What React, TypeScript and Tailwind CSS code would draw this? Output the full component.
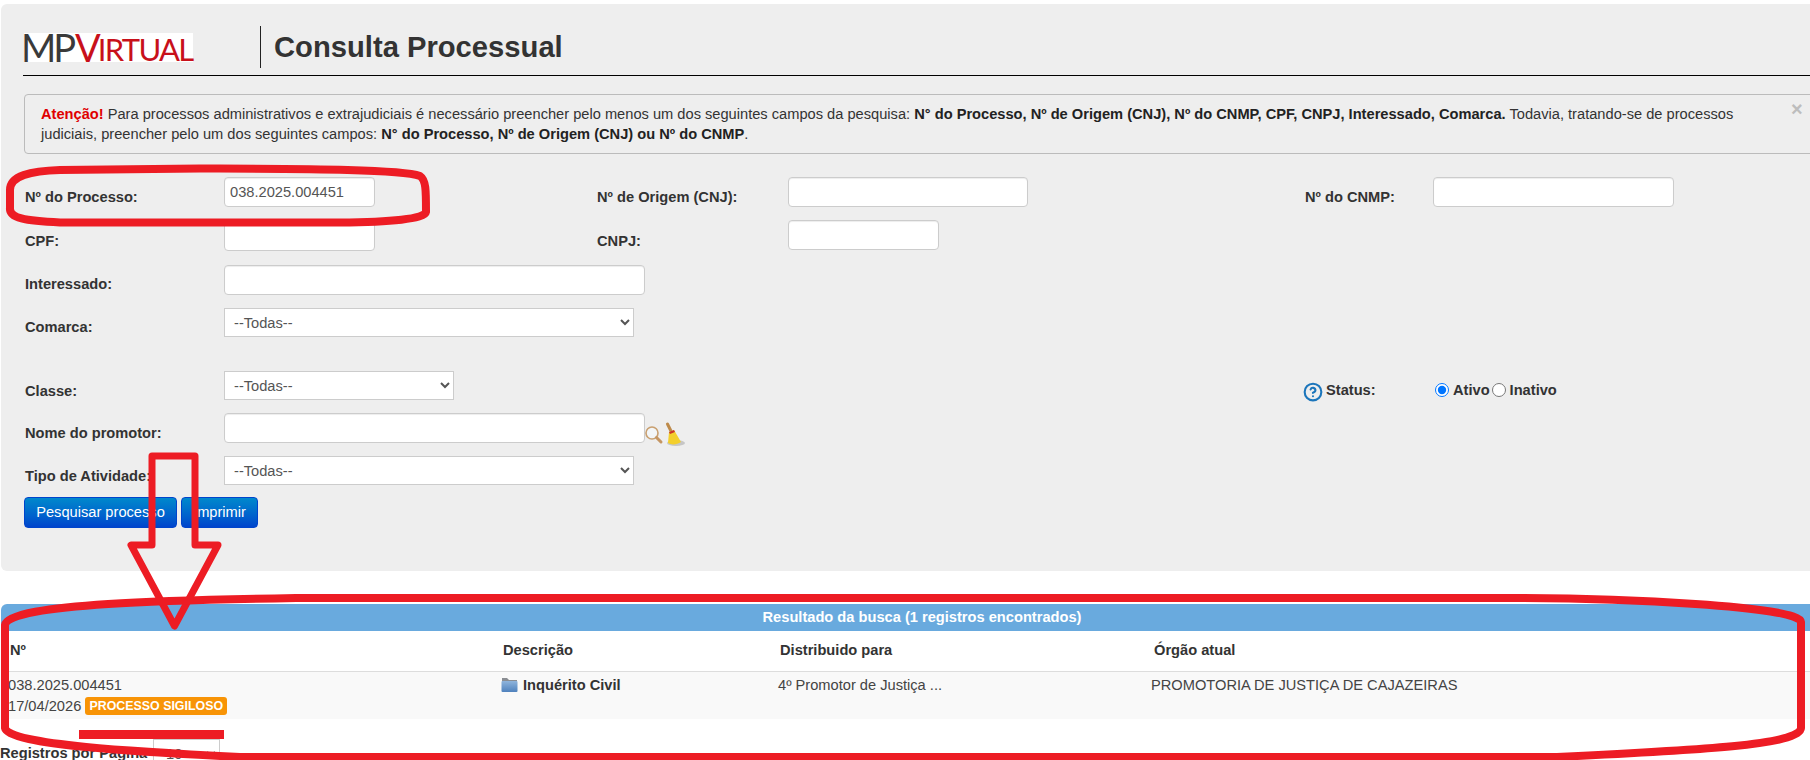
import { CircleHelp } from 'lucide-react';

const labelCls = 'pl-[1px] pt-[10px] font-bold text-[14.65px] leading-[20px] text-[#333]';
const inputCls = 'h-[30px] rounded-[4px] border border-[#ccc] bg-white px-[5px] text-[14.65px] text-[#555] shadow-[inset_0_1px_1px_rgba(0,0,0,0.075)]';
const selectCls = 'h-[29px] border border-[#ccc] bg-white pl-[5px] text-[14.65px] text-[#555]';

function Logo() {
  return (
    <div className="mt-[7px] flex h-[29px] w-[169px] items-center whitespace-nowrap bg-white font-['Lato','Liberation_Sans',sans-serif] font-normal">
      <span className="-ml-[3px] text-[38px] leading-[29px] tracking-[-3px] text-[#3a3a3a]">MP</span>
      <span className="ml-[2px] text-[38px] leading-[29px] tracking-[-3px] text-[#c8101a]">V</span>
      <span className="mt-[3px] text-[31px] leading-[26px] tracking-[-1.7px] text-[#c8101a]">IRTUAL</span>
    </div>
  );
}

function FolderIcon() {
  return (
    <svg width="17" height="16" viewBox="0 0 17 16" className="shrink-0">
      <defs>
        <linearGradient id="folderBlue" x1="0" y1="0" x2="0" y2="1">
          <stop offset="0" stopColor="#8fb4dc" />
          <stop offset="1" stopColor="#4f82bd" />
        </linearGradient>
      </defs>
      <path d="M1 1h5l2 2h8v3H1z" fill="#8a8d92" />
      <rect x="0.5" y="4" width="16" height="11" rx="1" fill="url(#folderBlue)" />
    </svg>
  );
}

function SearchBroom() {
  return (
    <svg width="42" height="26" viewBox="0 0 42 26" className="mt-[9px] shrink-0">
      <circle cx="7" cy="11" r="6" fill="#f3f6f8" stroke="#c9a071" strokeWidth="1.6" />
      <path d="M11.5 15.5L16 20" stroke="#c59663" strokeWidth="3" strokeLinecap="round" />
      <ellipse cx="31" cy="21" rx="9" ry="3" fill="#b5b5b5" opacity="0.7" />
      <path d="M22.5 2L26 9" stroke="#bd8a4a" strokeWidth="3" strokeLinecap="round" />
      <path d="M24 10l5-2 7 12c-4 3-10 3-13 1z" fill="#f3cf2c" />
      <path d="M24 10l5-2 1 2-5 2z" fill="#c9342b" />
    </svg>
  );
}

function Annotations() {
  return (
    <svg width="1810" height="760" viewBox="0 0 1810 760" fill="none" className="pointer-events-none absolute left-0 top-0">
      <path
        d="M10 190C10 176 30 171 60 170L200 168.500C300 169 400 169 420 176C426 180 426 190 426 212C425 219 390 222 340 222.500L60 222.500C25 221 9 218 10 208Z"
        stroke="#ed1c24"
        strokeWidth="8"
      />
      <path
        d="M152 456H195V545H218L174.500 626L131 545H152Z"
        stroke="#ed1c24"
        strokeWidth="7"
        strokeLinejoin="round"
      />
      <path
        d="M296 598C180 600 8 603 5 625V728C8 745 140 752 240 757H1557C1700 750 1800 745 1801 728V622C1800 606 1620 598 1503 598Z"
        stroke="#ed1c24"
        strokeWidth="8"
      />
      <rect x="79" y="730" width="145" height="9" fill="#ed1c24" />
    </svg>
  );
}

export default function App() {
  return (
    <div className="relative h-[760px] w-[1810px] overflow-hidden bg-white font-['Liberation_Sans',Arial,sans-serif] text-[14.65px] text-[#333]">
      <div className="w-[1843px]">
        {/* Search panel */}
        <div className="ml-[1px] mt-[4px] h-[567px] rounded-[6px] bg-[#eee] pl-[22px] pt-[22px]">
          <div className="flex h-[42px] items-start">
            <div className="ml-[1px]"><Logo /></div>
            <div className="ml-[67px] h-[42px] border-l border-[#222]" />
            <h1 className="ml-[13px] pt-[3px] text-[29.2px] font-bold leading-[36px] text-[#333]">Consulta Processual</h1>
          </div>
          <div className="mt-[7px] border-t border-black" />

          <div className="relative ml-[1px] mt-[18px] h-[60px] rounded-[4px] border border-[#bbb] bg-[#eee] pl-[16px] pt-[9px] leading-[20px]">
            <p className="w-[1720px]">
              <span className="font-bold text-[#e00000]">Atenção!</span> Para processos administrativos e extrajudiciais é necessário preencher pelo menos um dos seguintes campos da pesquisa: <b className="text-[#222]">N° do Processo, Nº de Origem (CNJ), Nº do CNMP, CPF, CNPJ, Interessado, Comarca.</b> Todavia, tratando-se de processos judiciais, preencher pelo um dos seguintes campos: <b className="text-[#222]">N° do Processo, Nº de Origem (CNJ) ou Nº do CNMP</b>.
            </p>
            <span className="absolute left-[1766px] top-[4px] text-[20px] font-bold leading-[20px] text-[#bdbdbd]">×</span>
          </div>

          {/* Form rows */}
          <div className="ml-[1px] mt-[23px] flex h-[44px] items-start">
            <div className={`${labelCls} w-[200px]`}>Nº do Processo:</div>
            <input className={`${inputCls} w-[151px]`} defaultValue="038.2025.004451" />
            <div className={`${labelCls} ml-[221px] w-[192px]`}>Nº de Origem (CNJ):</div>
            <input className={`${inputCls} w-[240px]`} />
            <div className={`${labelCls} ml-[276px] w-[129px]`}>Nº do CNMP:</div>
            <input className={`${inputCls} w-[241px]`} />
          </div>
          <div className="ml-[1px] flex h-[44px] items-start">
            <div className={`${labelCls} w-[200px]`}>CPF:</div>
            <input className={`${inputCls} w-[151px]`} />
            <div className={`${labelCls} ml-[221px] w-[192px]`}>CNPJ:</div>
            <input className={`${inputCls} -mt-[1px] w-[151px]`} />
          </div>
          <div className="ml-[1px] flex h-[43px] items-start">
            <div className={`${labelCls} w-[200px] !pt-[9px]`}>Interessado:</div>
            <input className={`${inputCls} w-[421px]`} />
          </div>
          <div className="ml-[1px] flex h-[63px] items-start">
            <div className={`${labelCls} w-[200px] !pt-[9px]`}>Comarca:</div>
            <select className={`${selectCls} w-[410px]`}><option>--Todas--</option></select>
          </div>
          <div className="ml-[1px] flex h-[42px] items-start">
            <div className={`${labelCls} w-[200px]`}>Classe:</div>
            <select className={`${selectCls} w-[230px]`}><option>--Todas--</option></select>
            <div className="ml-[849px] flex w-[130px] items-start pt-[9px]">
              <CircleHelp className="mt-[2px] h-[20px] w-[20px] text-[#1b75bb]" strokeWidth={2.5} />
              <span className="ml-[3px] font-bold leading-[20px]">Status:</span>
            </div>
            <div className="flex items-center pt-[9px] font-bold leading-[20px]">
              <input type="radio" name="status" defaultChecked className="ml-[2px] h-[14px] w-[14px]" />
              <span className="ml-[4px]">Ativo</span>
              <input type="radio" name="status" className="ml-[2px] h-[14px] w-[14px]" />
              <span className="ml-[4px]">Inativo</span>
            </div>
          </div>
          <div className="ml-[1px] flex h-[43px] items-start">
            <div className={`${labelCls} w-[200px]`}>Nome do promotor:</div>
            <input className={`${inputCls} w-[421px]`} />
            <SearchBroom />
          </div>
          <div className="ml-[1px] flex h-[41px] items-start">
            <div className={`${labelCls} w-[200px]`}>Tipo de Atividade:</div>
            <select className={`${selectCls} w-[410px]`}><option>--Todas--</option></select>
          </div>
          <div className="ml-[1px] flex gap-[4px]">
            <button className="h-[31px] w-[153px] rounded-[4px] border border-[#04c] bg-gradient-to-b from-[#08c] to-[#04c] text-[14.65px] text-white">Pesquisar processo</button>
            <button className="h-[31px] w-[77px] rounded-[4px] border border-[#04c] bg-gradient-to-b from-[#08c] to-[#04c] text-[14.65px] text-white">Imprimir</button>
          </div>
        </div>

        {/* Results */}
        <div className="ml-[1px] mt-[33px]">
          <div className="h-[27px] rounded-t-[6px] bg-[#69aade] text-center font-bold leading-[27px] text-white">
            Resultado da busca (1 registros encontrados)
          </div>
          <table className="w-full table-fixed border-collapse">
            <thead>
              <tr className="h-[40px] border-b border-[#ddd] text-left font-bold text-[#333]">
                <th className="w-[495px] pl-[9px]">Nº</th>
                <th className="w-[277px] pl-[7px]">Descrição</th>
                <th className="w-[374px] pl-[7px]">Distribuido para</th>
                <th className="pl-[7px]">Órgão atual</th>
              </tr>
            </thead>
            <tbody>
              <tr className="h-[48px] bg-[#f9f9f9] align-top leading-[21px] text-[#444]">
                <td className="pl-[7px] pt-[3px]">
                  038.2025.004451
                  <br />
                  17/04/2026
                  <span className="ml-[4px] inline-block h-[18px] w-[142px] rounded-[3px] bg-[#f89406] text-center align-[1px] text-[12.4px] font-bold leading-[18px] text-white">PROCESSO SIGILOSO</span>
                </td>
                <td className="pl-[5px] pt-[3px]">
                  <div className="flex items-center gap-[5px]">
                    <FolderIcon />
                    <b className="text-[#333]">Inquérito Civil</b>
                  </div>
                </td>
                <td className="pl-[5px] pt-[3px]">4º Promotor de Justiça ...</td>
                <td className="pl-[4px] pt-[3px]">PROMOTORIA DE JUSTIÇA DE CAJAZEIRAS</td>
              </tr>
            </tbody>
          </table>
        </div>
        <div className="mt-[20px] flex items-start">
          <div className="w-[153px] pt-[4px] font-bold leading-[20px]">Registros por Página</div>
          <select className="h-[30px] w-[67px] border border-[#ccc] bg-white pl-[8px] text-[14.65px] text-[#555]"><option>10</option></select>
        </div>
      </div>
      <Annotations />
    </div>
  );
}
